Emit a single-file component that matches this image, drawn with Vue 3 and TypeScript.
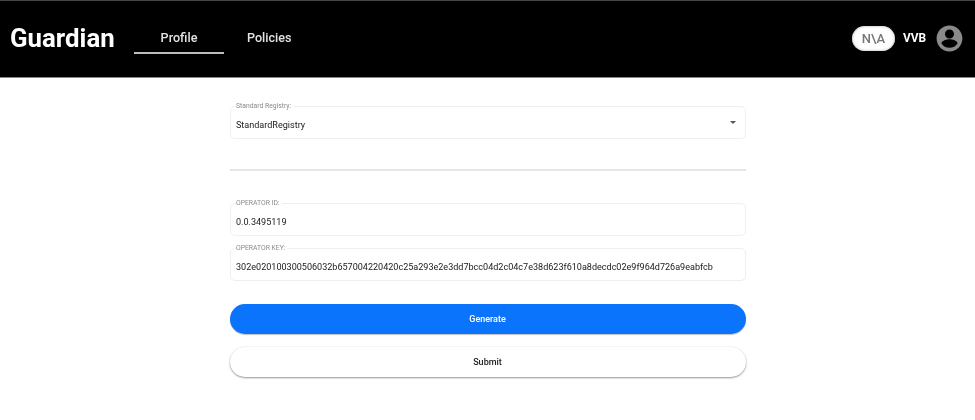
<script setup lang="ts">
const tabs: { label: string; active: boolean }[] = [
  { label: 'Profile', active: true },
  { label: 'Policies', active: false },
]
const operatorKey = '302e020100300506032b657004220420c25a293e2e3dd7bcc04d2c04c7e38d623f610a8decdc02e9f964d726a9eabfcb'
</script>

<template>
  <div class="page">
    <header class="header">
      <div class="brand">Guardian</div>
      <nav class="tabs">
        <a v-for="t in tabs" :key="t.label" class="tab" :class="{ active: t.active }">{{ t.label }}</a>
      </nav>
      <div class="user">
        <span class="pill">N\A</span>
        <span class="name">VVB</span>
        <svg class="avatar" viewBox="0 0 24 24" width="31" height="31" aria-hidden="true">
          <path fill="#8a8a8a" d="M12 2C6.48 2 2 6.48 2 12s4.48 10 10 10 10-4.48 10-10S17.52 2 12 2zm0 3c1.93 0 3.5 1.57 3.5 3.5S13.93 12 12 12s-3.5-1.57-3.5-3.5S10.07 5 12 5zm0 14.2c-2.6 0-4.9-1.33-6.24-3.35.03-2.07 4.16-3.2 6.24-3.2s6.21 1.13 6.24 3.2C16.9 17.87 14.6 19.2 12 19.2z" />
        </svg>
      </div>
    </header>

    <main class="form">
      <fieldset class="field select">
        <legend>Standard Registry:</legend>
        <span class="value">StandardRegistry</span>
        <span class="caret"></span>
      </fieldset>

      <hr class="divider" />

      <fieldset class="field upper">
        <legend>OPERATOR ID:</legend>
        <span class="value">0.0.3495119</span>
      </fieldset>
      <fieldset class="field upper second">
        <legend>OPERATOR KEY:</legend>
        <span class="value">{{ operatorKey }}</span>
      </fieldset>

      <button class="btn primary" type="button">Generate</button>
      <button class="btn plain" type="button">Submit</button>
    </main>
  </div>
</template>

<style>
html, body { margin: 0; background: #fff; }
</style>

<style scoped>
.page {
  width: 975px;
  height: 420px;
  overflow: hidden;
  background: #fff;
  font-family: Roboto, "Liberation Sans", sans-serif;
  filter: blur(0.45px);
}
.header {
  box-sizing: border-box;
  height: 78px;
  background: #000;
  border-top: 1px solid #444;
  border-bottom: 1px solid #888;
  display: flex;
  align-items: center;
  color: #fff;
}
.brand {
  margin-left: 10px;
  font-size: 25.8px;
  font-weight: 700;
  width: 124px;
  position: relative;
  top: -1px;
}
.tabs { display: flex; align-self: stretch; }
.tab {
  box-sizing: border-box;
  width: 90px;
  height: 53px;
  padding-top: 29px;
  text-align: center;
  font-size: 12.6px;
  font-weight: 500;
  line-height: 16px;
  color: #e2e2e2;
  border-bottom: 2px solid transparent;
}
.tab.active { border-bottom-color: #bdbdbd; }
.tab + .tab { width: 46px; margin-left: 23px; text-align: left; white-space: nowrap; }
.user {
  margin-left: auto;
  margin-right: 10px;
  display: flex;
  align-items: center;
  position: relative;
  top: -1px;
}
.pill {
  box-sizing: border-box;
  width: 43px;
  height: 25px;
  border-radius: 13px;
  background: #fff;
  color: #777;
  font-size: 13px;
  font-weight: 500;
  line-height: 25px;
  text-align: center;
  box-shadow: 0 0 3px #aaa inset;
}
.name {
  margin-left: 8px;
  width: 31px;
  font-size: 11.9px;
  font-weight: 700;
}
.avatar { margin-left: 0; display: block; }
.form {
  box-sizing: border-box;
  width: 516px;
  margin: 0 0 0 229.5px;
  padding-top: 22px;
  display: flex;
  flex-direction: column;
}
.field {
  box-sizing: border-box;
  position: relative;
  margin: 0;
  height: 39px;
  padding: 0 5.5px;
  border: 1px solid #efefef;
  border-radius: 5px;
  display: flex;
  align-items: center;
}
.field legend {
  padding: 0 2px 0 0;
  margin-left: 0;
  font-size: 6.8px;
  line-height: 12px;
  color: #8a8a8a;
}
.field .value {
  font-size: 9.05px;
  line-height: 12px;
  color: #1a1a1a;
  white-space: nowrap;
  position: relative;
  top: 7px;
}
.caret {
  position: absolute;
  right: 9px;
  top: 8.5px;
  width: 0;
  height: 0;
  border-left: 3.5px solid transparent;
  border-right: 3.5px solid transparent;
  border-top: 3.5px solid #555;
}
.divider {
  margin: 30px 0 26px;
  height: 2px;
  border: 0;
  background: #e6e6e6;
}
.second { margin-top: 6px; }
.btn {
  display: block;
  width: 100%;
  height: 30px;
  border: 0;
  border-radius: 15px;
  font-family: inherit;
  font-size: 9px;
  font-weight: 500;
  padding: 0;
}
.primary {
  margin-top: 23px;
  background: #0b74fd;
  color: #fff;
  box-shadow: 0 1px 1px rgba(0, 0, 0, 0.25);
}
.plain {
  margin-top: 13px;
  background: #fff;
  color: #222;
  box-shadow: 0 1px 2px 0 rgba(0, 0, 0, 0.4), 0 0 2px rgba(0, 0, 0, 0.08);
}
</style>
